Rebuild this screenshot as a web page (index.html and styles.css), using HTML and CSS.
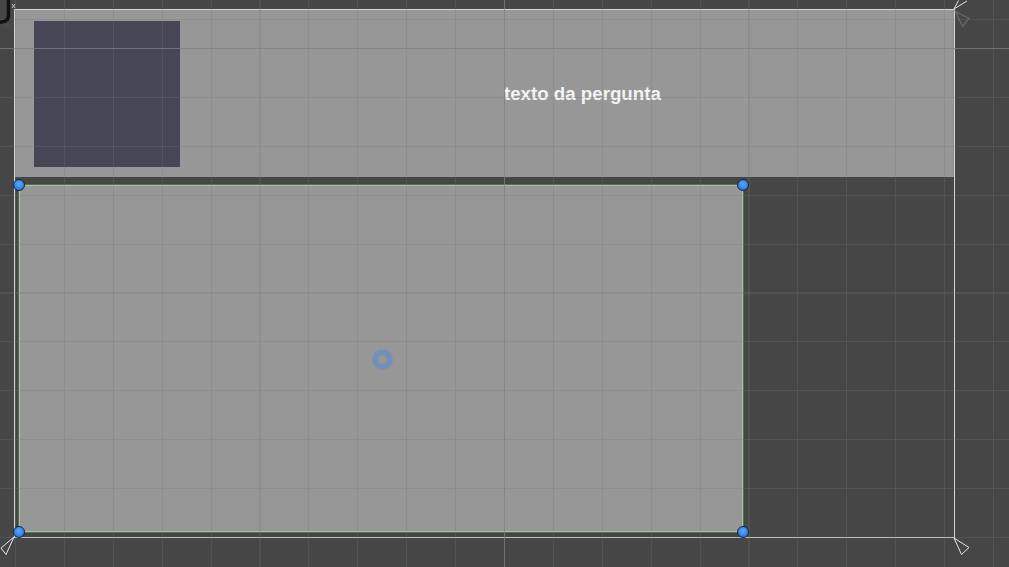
FILE: index.html
```html
<!DOCTYPE html>
<html>
<head>
<meta charset="utf-8">
<link rel="stylesheet" href="styles.css">
</head>
<body>
<div class="scene">
  <div class="canvas-frame">
    <div class="question-panel">
      <div class="question-image"></div>
      <div class="question-text">texto da pergunta</div>
    </div>
    <div class="answers-panel">
      <span class="handle handle-tl"></span>
      <span class="handle handle-tr"></span>
      <span class="handle handle-bl"></span>
      <span class="handle handle-br"></span>
      <span class="pivot"></span>
    </div>
  </div>
  <div class="grid-overlay"></div>
  <svg class="gizmos" width="1009" height="567" viewBox="0 0 1009 567">
    <path d="M8.5 0 L8.5 15 Q8.5 21.5 2 22 L0 22" fill="none" stroke="#111" stroke-width="3.4"/>
    <path d="M12 4 L15 8 M15 4 L12 8" stroke="#ddd" stroke-width="0.8"/>
    <path d="M3 24 L9 24 L6 28 Z" fill="none" stroke="#555" stroke-width="0.8"/>
    <path d="M954 9 L958.5 0.5 M954 9 L967 1" fill="none" stroke="#e6e6e6" stroke-width="1"/>
    <path d="M955.5 11.5 L969 18.5 L962.5 26.5 Z" fill="none" stroke="#6a6a6a" stroke-width="1.2"/>
    <path d="M954 538 L969 547.5 L961.5 554.5 Z" fill="none" stroke="#e6e6e6" stroke-width="1"/>
    <path d="M14 537 L1 548 L6 554.5 Z" fill="none" stroke="#e6e6e6" stroke-width="1"/>
  </svg>
</div>
</body>
</html>
```

FILE: styles.css
```css
html, body {
  margin: 0;
  padding: 0;
}

body {
  width: 1009px;
  height: 567px;
  overflow: hidden;
  background: #464646;
  font-family: "Liberation Sans", Arial, sans-serif;
}

.scene {
  position: relative;
  width: 1009px;
  height: 567px;
  padding-top: 9px;
  box-sizing: border-box;
}

.canvas-frame {
  margin-left: 14px;
  width: 939px;
  height: 527px;
  border: 1px solid #d6d6d6;
  display: flex;
  flex-direction: column;
}

.question-panel {
  height: 167px;
  background: #979797;
  display: flex;
  align-items: center;
  padding-left: 19px;
  border-right: 1px solid #8c8c8c;
}

.question-image {
  width: 146px;
  height: 146px;
  background: #474657;
  flex: none;
}

.question-text {
  margin-left: 324px;
  margin-top: 0;
  color: #f4f4f4;
  font-size: 18.7px;
  font-weight: bold;
}

.answers-panel {
  position: relative;
  margin-top: 8px;
  margin-left: 4px;
  width: 724px;
  height: 347px;
  background: #979797;
  box-shadow: inset 1px 0 0 #9ccb94, inset -1px 0 0 #9ccb94, inset 0 1px 0 #9ccb94, inset 0 -1px 0 #9ccb94, 0 0 0 1px #5e6a5c;
}

.handle {
  position: absolute;
  width: 12px;
  height: 12px;
  margin: -6px 0 0 -6px;
  border-radius: 50%;
  background: radial-gradient(circle at 50% 40%, #62a8ff 0, #3a86f2 50%, #1f5fc8 100%);
  border: 1px solid #1b2636;
  box-sizing: border-box;
  z-index: 3;
}

.handle-tl { left: 0; top: 0; }
.handle-tr { left: 724px; top: 0; }
.handle-bl { left: 0; top: 347px; }
.handle-br { left: 724px; top: 347px; }

.pivot {
  position: absolute;
  left: 363px;
  top: 174px;
  width: 19px;
  height: 19px;
  margin: -9.5px 0 0 -9.5px;
  border-radius: 50%;
  border: 4px solid rgba(100, 142, 204, 0.85);
  box-sizing: border-box;
  box-shadow: 0 0 2px rgba(80, 110, 160, 0.6), inset 0 0 2px rgba(80, 110, 160, 0.6);
}

.grid-overlay {
  position: absolute;
  left: 0;
  top: 0;
  width: 1009px;
  height: 567px;
  pointer-events: none;
  z-index: 2;
  background-image:
    linear-gradient(to right, transparent 504px, rgba(128, 128, 128, 0.69) 504px, rgba(128, 128, 128, 0.69) 505px, transparent 505px),
    linear-gradient(to bottom, transparent 48px, rgba(128, 128, 128, 0.69) 48px, rgba(128, 128, 128, 0.69) 49px, transparent 49px),
    repeating-linear-gradient(to right, rgba(116, 116, 116, 0.26) 0, rgba(116, 116, 116, 0.26) 1px, transparent 1px, transparent 48.9px),
    repeating-linear-gradient(to bottom, rgba(116, 116, 116, 0.26) 0, rgba(116, 116, 116, 0.26) 1px, transparent 1px, transparent 48.9px);
  background-position: 0 0, 0 0, 15px 0, 0 48px;
}

.gizmos {
  position: absolute;
  left: 0;
  top: 0;
  pointer-events: none;
  z-index: 4;
}
```
